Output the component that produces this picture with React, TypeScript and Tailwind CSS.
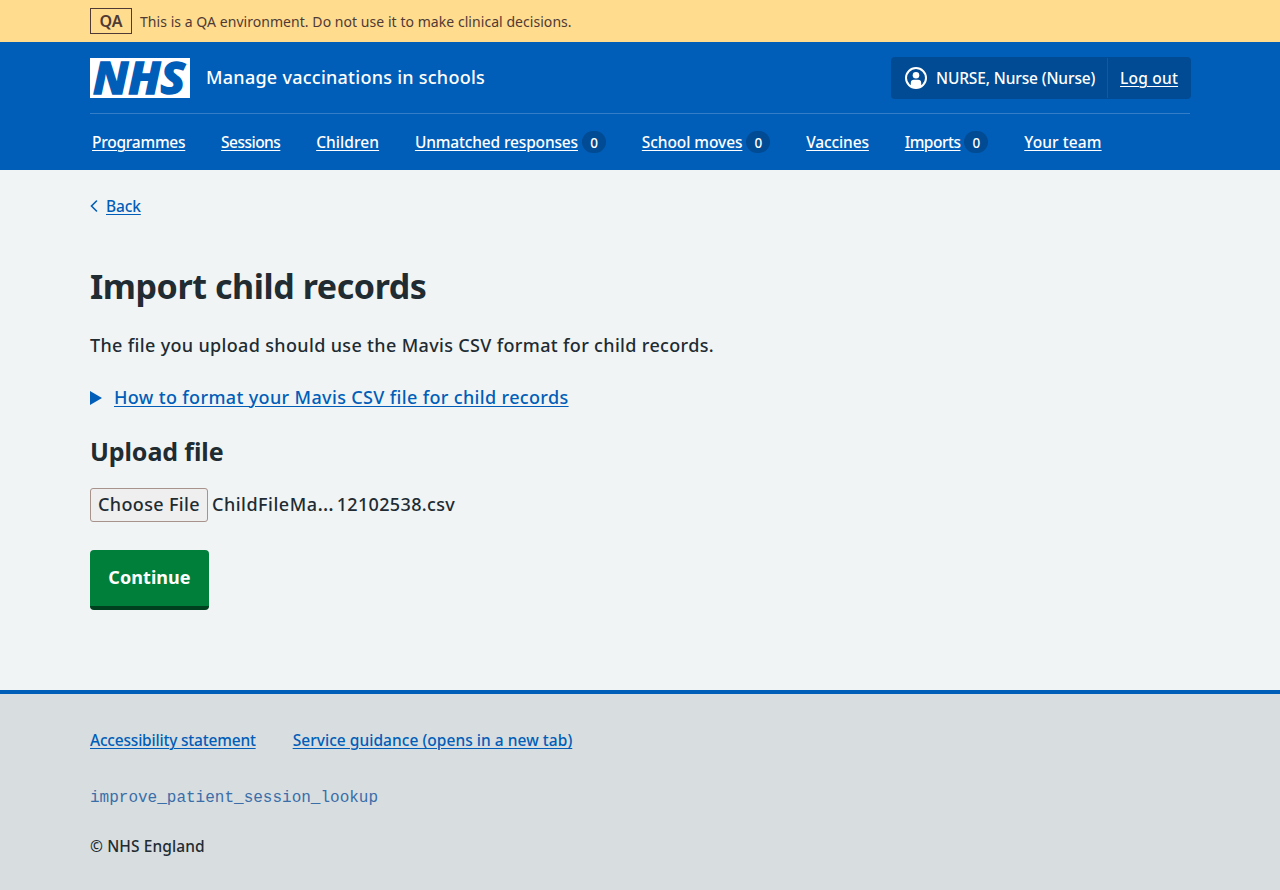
type NavItem = { label: string; track: string; count?: number };

const navItems: NavItem[] = [
  { label: "Programmes", track: "tracking-[-0.24px]" },
  { label: "Sessions", track: "tracking-[-0.52px]" },
  { label: "Children", track: "tracking-[0.07px]" },
  { label: "Unmatched responses", track: "tracking-[-0.15px]", count: 0 },
  { label: "School moves", track: "tracking-[-0.07px]", count: 0 },
  { label: "Vaccines", track: "tracking-[-0.12px]" },
  { label: "Imports", track: "tracking-[-0.5px]", count: 0 },
  { label: "Your team", track: "tracking-[0.1px]" },
];

const underline = "underline decoration-1 underline-offset-2";

function Logo() {
  return (
    <svg width="100" height="40" viewBox="0 0 100 40" role="img" aria-label="NHS" className="block shrink-0">
      <rect width="100" height="40" fill="#fff" />
      <text
        x="3"
        y="36"
        fill="#005eb8"
        stroke="#005eb8"
        strokeWidth="1.4"
        textLength="92"
        lengthAdjust="spacingAndGlyphs"
        className="text-[45px] leading-none font-extrabold italic font-['Noto_Sans',sans-serif]"
      >
        NHS
      </text>
    </svg>
  );
}

function UserIcon() {
  return (
    <svg width="22" height="22" viewBox="0 0 22 22" className="block shrink-0" aria-hidden="true">
      <circle cx="11" cy="11" r="10" fill="none" stroke="#fff" strokeWidth="2" />
      <circle cx="11" cy="8.2" r="3.3" fill="#fff" />
      <path d="M5.8 19.5V16a3.2 3.2 0 0 1 3.2-3.2h4a3.2 3.2 0 0 1 3.2 3.2v3.5A10 10 0 0 1 5.8 19.5z" fill="#fff" />
    </svg>
  );
}

function Header() {
  return (
    <header className="h-32 bg-[#005eb8] text-[15.5px] font-medium text-white">
      <div className="mx-auto w-[1100px]">
        <div className="flex h-[72px] items-center border-b border-[#337ec6]">
          <Logo />
          <span className="ml-4 pb-px text-lg tracking-[0.26px]">Manage vaccinations in schools</span>
          <div className="-mr-px ml-auto flex h-[42px] w-[300px] rounded bg-[#004b93] py-px">
            <div className="flex w-[217px] shrink-0 items-center border-r border-[#005eb8] pl-3.5 whitespace-nowrap">
              <UserIcon />
              <span className="ml-[9px] tracking-[-0.13px]">NURSE, Nurse (Nurse)</span>
            </div>
            <a className={`flex items-center pl-3 tracking-[0.22px] whitespace-nowrap ${underline}`}>Log out</a>
          </div>
        </div>
        <nav className="flex h-14 items-center gap-[35.8px] pl-0.5 whitespace-nowrap">
          {navItems.map((item) => (
            <div key={item.label} className="flex items-center">
              <a className={`${underline} ${item.track}`}>{item.label}</a>
              {item.count !== undefined && (
                <span className="ml-1 flex h-[22px] w-6 items-center justify-center rounded-full bg-[#004b93] pt-px text-[13.5px]">
                  {item.count}
                </span>
              )}
            </div>
          ))}
        </nav>
      </div>
    </header>
  );
}

export default function App() {
  return (
    <div className="flex min-h-[890px] flex-col bg-[#f0f4f5] text-base leading-6 text-[#212b32] font-['Noto_Sans',sans-serif]">
      <div className="h-[42px] bg-[#ffdc8e] text-[#4f3a35]">
        <div className="mx-auto flex h-full w-[1100px] items-center">
          <strong className="flex h-[26px] w-[42px] items-center justify-center border border-[#4f3a35] font-semibold">QA</strong>
          <span className="ml-2 pt-0.5 text-sm tracking-[0.05px]">This is a QA environment. Do not use it to make clinical decisions.</span>
        </div>
      </div>
      <Header />
      <main className="mx-auto flex w-[1100px] flex-1 flex-col items-start">
        <div className="mt-6 flex items-center text-[#005eb8]">
          <svg width="8" height="12" viewBox="0 0 8 12" className="mr-2" aria-hidden="true">
            <path d="M6.5 1 1.5 6l5 5" fill="none" stroke="#005eb8" strokeWidth="1.6" strokeLinecap="round" />
          </svg>
          <a className={`text-[15.5px] font-medium tracking-[-0.12px] ${underline}`}>Back</a>
        </div>
        <h1 className="mt-[47px] text-[34px] leading-[42px] font-bold tracking-[-0.42px]">Import child records</h1>
        <p className="mt-6 text-lg leading-7 font-medium tracking-[0.34px]">
          The file you upload should use the Mavis CSV format for child records.
        </p>
        <div className="mt-[25px] flex h-7 items-center text-lg leading-7 text-[#005eb8]">
          <svg width="12" height="14" viewBox="0 0 12 14" className="mr-3" aria-hidden="true">
            <path d="M0 0 12 7 0 14z" fill="#005eb8" />
          </svg>
          <span className={`pb-0.5 font-medium tracking-[0.35px] ${underline}`}>How to format your Mavis CSV file for child records</span>
        </div>
        <h2 className="mt-[23px] text-[25px] leading-8 font-bold tracking-[-0.1px]">Upload file</h2>
        <div className="mt-[21px] flex items-center text-lg font-medium">
          <button className="flex h-[34px] w-[118px] items-center justify-center rounded-[3px] border border-[#a8928c] bg-[#efefef] pb-0.5 tracking-[0.36px] whitespace-nowrap">
            Choose File
          </button>
          <span className="ml-1 pb-0.5 tracking-[0.34px]">
            <span className="tracking-[0.5px]">ChildFileMa</span>
            <span className="text-xl leading-none tracking-[3px]">…</span>12102538.csv
          </span>
        </div>
        <button className="mt-7 h-[60px] w-[119px] rounded border-b-4 border-[#00401e] bg-[#007f3b] pb-0.5 text-lg font-bold tracking-[0.06px] text-white">
          Continue
        </button>
      </main>
      <footer className="h-[200px] border-t-4 border-[#005eb8] bg-[#d8dde0]">
        <div className="mx-auto w-[1100px] pt-[34px]">
          <div className="flex gap-[37px] text-[15.5px] font-medium text-[#005eb8]">
            <a className={`tracking-[-0.2px] ${underline}`}>Accessibility statement</a>
            <a className={`tracking-[0.04px] ${underline}`}>Service guidance (opens in a new tab)</a>
          </div>
          <p className="mt-[34px] text-[#3a6ea8] font-['Liberation_Mono',monospace]">improve_patient_session_lookup</p>
          <p className="mt-6 text-[15.5px] font-medium tracking-[0.1px]">© NHS England</p>
        </div>
      </footer>
    </div>
  );
}
